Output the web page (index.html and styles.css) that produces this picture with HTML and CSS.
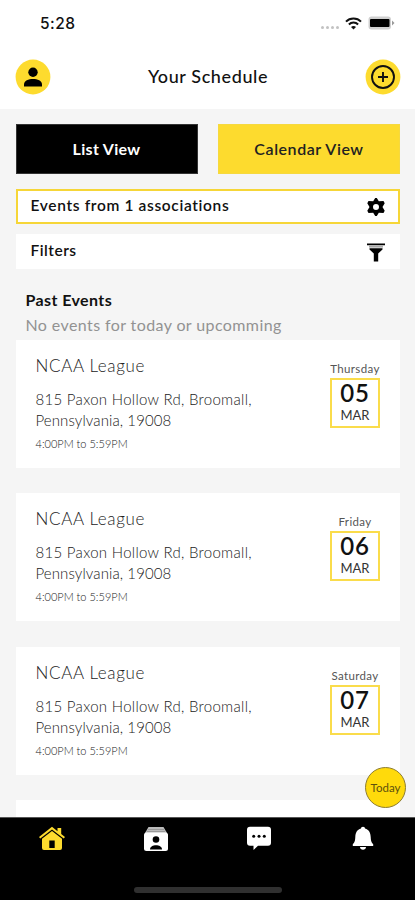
FILE: index.html
```html
<!DOCTYPE html>
<html lang="en">
<head>
<meta charset="utf-8">
<title>Your Schedule</title>
<link rel="stylesheet" href="styles.css">
</head>
<body>
<div class="app">
  <header class="header">
    <div class="status">
      <span class="clock">5:28</span>
      <div class="indicators">
        <span class="dots"><i></i><i></i><i></i><i></i></span>
        <svg class="wifi" width="17" height="13" viewBox="0 0 17 13" fill="none" stroke="#111" stroke-width="2"><path d="M1 4.6C5 .4 12 .4 16 4.6M3.9 7.500c2.500-2.600 6.700-2.600 9.200 0"/><path d="M8.500 12.600 6 10c1.500-1.300 3.500-1.300 5 0z" fill="#111" stroke="none"/></svg>
        <svg class="battery" width="27" height="14" viewBox="0 0 27 14"><rect x=".5" y=".5" width="22.500" height="13" rx="3" fill="#d0d0d0"/><rect x="2" y="3" width="19.500" height="8" rx="1" fill="#000"/><path d="M24 4.500 26.500 7 24 9.500z" fill="#999"/></svg>
      </div>
    </div>
    <div class="title-row">
      <svg width="36" height="36" viewBox="0 0 36 36"><circle cx="18" cy="18" r="17.400" fill="#fddb2e"/><circle cx="18" cy="13.200" r="4.700"/><path d="M9 27.500v-2.100c0-7.200 18-7.200 18 0v2.100z"/></svg>
      <h1>Your Schedule</h1>
      <svg width="36" height="36" viewBox="0 0 36 36"><circle cx="18" cy="18" r="17.400" fill="#fddb2e"/><g fill="none" stroke="#111" stroke-width="1.900"><circle cx="18" cy="18" r="11"/><path d="M18 13v10M13 18h10"/></g></svg>
    </div>
  </header>

  <main class="content">
    <div class="tabs">
      <button class="tab tab-dark">List View</button>
      <button class="tab tab-yellow">Calendar View</button>
    </div>
    <div class="bar associations">
      <span class="assoc-text">Events from 1 associations</span>
      <svg width="18" height="18" viewBox="0 0 18 18"><path fill-rule="evenodd" d="M8.200 0h1.600l2 3.300 4.700-.3 1.200 2.300L15.500 9l2.200 3.700-1.200 2.300-4.700-.3-2 3.300H8.200l-2-3.300-4.700.3-1.200-2.300L2.500 9 .3 5.300 1.500 3l4.700.3zM9 6a3 3 0 1 0 0 6 3 3 0 0 0 0-6z"/></svg>
    </div>
    <div class="bar filters">
      <span class="filter-text">Filters</span>
      <svg width="18" height="19" viewBox="0 0 18 19"><path d="M0 .5h18v1.800H0zM2.500 5.300h13v1.300L11.200 10.500v8H6.800v-8L2.500 6.600z"/><path fill="#aaa" d="M2 2.600h14v2H2z"/></svg>
    </div>
    <section class="events">
      <h2>Past Events</h2>
      <p class="empty">No events for today or upcomming</p>
      <article class="card">
        <div class="details">
          <h3>NCAA League</h3>
          <p class="address"><span class="line1">815 Paxon Hollow Rd, Broomall,</span><br><span class="line2">Pennsylvania, 19008</span></p>
          <p class="time">4:00PM to 5:59PM</p>
        </div>
        <div class="date"><span class="weekday">Thursday</span><div class="day"><b>05</b><span>MAR</span></div></div>
      </article>
      <article class="card">
        <div class="details">
          <h3>NCAA League</h3>
          <p class="address"><span class="line1">815 Paxon Hollow Rd, Broomall,</span><br><span class="line2">Pennsylvania, 19008</span></p>
          <p class="time">4:00PM to 5:59PM</p>
        </div>
        <div class="date"><span class="weekday">Friday</span><div class="day"><b>06</b><span>MAR</span></div></div>
      </article>
      <article class="card">
        <div class="details">
          <h3>NCAA League</h3>
          <p class="address"><span class="line1">815 Paxon Hollow Rd, Broomall,</span><br><span class="line2">Pennsylvania, 19008</span></p>
          <p class="time">4:00PM to 5:59PM</p>
        </div>
        <div class="date"><span class="weekday">Saturday</span><div class="day"><b>07</b><span>MAR</span></div></div>
      </article>
      <article class="card"></article>
    </section>
    <button class="today">Today</button>
  </main>

  <nav class="nav">
    <div class="nav-items">
      <svg width="28" height="26" viewBox="0 0 28 26"><path fill="#fddb2e" d="M14 .8 1 11l1.300 1.600L14 3.500l11.700 9.100L27 11l-3.800-3V2h-3.700v3.200zM14 5 4 12.700V22q0 2 2 2h16q2 0 2-2v-9.300zM11.300 14.500h5.400V22h-5.400z" fill-rule="evenodd"/></svg>
      <svg width="28" height="26" viewBox="0 0 28 26"><path fill="#bbb" d="M6.500 1h15L25 7H3z"/><path stroke="#999" d="M6 3.500h16M5 5.500h18"/><rect x="2" y="6.500" width="24" height="18.500" rx="2.500" fill="#fff"/><circle cx="14" cy="13.500" r="3.300"/><path d="M8 23.500c0-5.600 12-5.600 12 0z"/></svg>
      <svg width="28" height="26" viewBox="0 0 28 26"><path fill="#fff" d="M5 .8h18q3 0 3 3v13q0 3-3 3H13L8.500 24v-4.200H5q-3 0-3-3v-13q0-3 3-3z"/><g><circle cx="8.700" cy="10.200" r="1.500"/><circle cx="14" cy="10.200" r="1.500"/><circle cx="19.300" cy="10.200" r="1.500"/></g></svg>
      <svg width="28" height="26" viewBox="0 0 28 26"><path fill="#fff" d="M14 .8c1.200 0 2 .7 2 1.800 4 1 5.500 4.400 5.700 8.400.2 4.200.8 5.500 2.500 7.200V20H3.800v-1.800c1.700-1.700 2.300-3 2.500-7.200.2-4 1.700-7.400 5.700-8.400 0-1.100.8-1.800 2-1.800zM11 21h6c0 3.500-6 3.500-6 0z"/></svg>
    </div>
    <div class="home-indicator"></div>
  </nav>
</div>
</body>
</html>
```
FILE: styles.css
```css
* { box-sizing: border-box; margin: 0; padding: 0; }
body { background: #f5f5f5; font-family: Lato, "Open Sans", sans-serif; color: #111; }
svg { display: block; flex: none; }
button { border: 0; font-family: inherit; }
.app { height: 900px; display: flex; flex-direction: column; overflow: hidden; }
.header { height: 109px; flex: none; background: #fff; }
.status { height: 46px; padding: 0 20px 0 40px; display: flex; justify-content: space-between; align-items: center; }
.clock { font: 500 15.500px/46px Inter, sans-serif; letter-spacing: .5px; padding-top: 2px; }
.indicators { display: flex; align-items: center; gap: 6px; }
.dots { display: flex; gap: 2px; padding-top: 8px; }
.dots i { width: 3px; height: 3px; border-radius: 50%; background: #c2c2c2; }
.title-row { display: flex; justify-content: space-between; align-items: center; padding: 13px 14px 0 15px; }
h1 { font-size: 18px; line-height: 34px; padding-bottom: 2px; font-weight: 500; letter-spacing: .6px; }
.content { position: relative; flex: 1; min-height: 0; overflow: hidden; padding: 15px 15px 0 15.500px; }
.tabs { display: flex; justify-content: space-between; }
.tab { width: 182px; height: 50px; padding-bottom: 2px; font-size: 16px; font-weight: 700; border: 1px solid #333; }
.tab-dark { background: #000; color: #fff; letter-spacing: .3px; }
.tab-yellow { background: #fddb2e; color: #222; border-color: #f6d93f; font-weight: 600; letter-spacing: .55px; }
.bar { display: flex; justify-content: space-between; align-items: center; background: #fff; height: 35px; font-size: 15.500px; font-weight: 600; color: #111; }
.associations { margin-top: 15px; border: 2px solid #f6d638; padding: 0 13px; }
.associations span { padding-bottom: 4px; letter-spacing: .65px; }
.filters { margin-top: 10px; padding: 1px 15px 0; }
.filters span { padding-bottom: 4px; letter-spacing: .5px; }
.events h2 { margin: 20px 0 0 10px; font-size: 16px; line-height: 22px; font-weight: 700; letter-spacing: .4px; }
.empty { margin: 2px 0 5px 10px; height: 22px; font-size: 16px; line-height: 24px; color: #929292; letter-spacing: .4px; }
.card { height: 128px; margin-bottom: 25.400px; padding: 15px 20px 0; display: flex; justify-content: space-between; background: #fff; }
.details { color: #222; font-weight: 300; }
h3 { font-size: 17px; line-height: 22px; font-weight: 300; letter-spacing: .65px; }
.address { margin-top: 12px; font-size: 15px; line-height: 21px; letter-spacing: .3px; }
.line2 { letter-spacing: .1px; }
.time { margin-top: 5px; font-size: 11px; line-height: 16px; }
.date { width: 50px; padding-top: 5px; display: flex; flex-direction: column; align-items: center; }
.weekday { font-size: 11.500px; line-height: 17px; height: 18px; color: #555; white-space: nowrap; letter-spacing: .35px; }
.day { width: 50px; height: 50px; border: 2px solid #fadc4b; display: flex; flex-direction: column; align-items: center; }
.day b { font-size: 24px; line-height: 25px; font-weight: 600; letter-spacing: .8px; }
.day span { font-size: 13px; line-height: 20px; color: #333; }
.today { position: absolute; right: 9px; bottom: 9px; width: 41px; height: 41px; border-radius: 50%; background: #ffda0b; border: 1px solid #8d7d32; font-size: 11.500px; color: #5c500e; }
.nav { height: 83px; flex: none; background: #000; border-top: 1px solid #555; }
.nav-items { display: grid; grid-template-columns: repeat(4, 1fr); justify-items: center; padding-top: 8px; }
.home-indicator { width: 148px; height: 6px; margin: 35px auto 0; border-radius: 3px; background: #303030; }
```
